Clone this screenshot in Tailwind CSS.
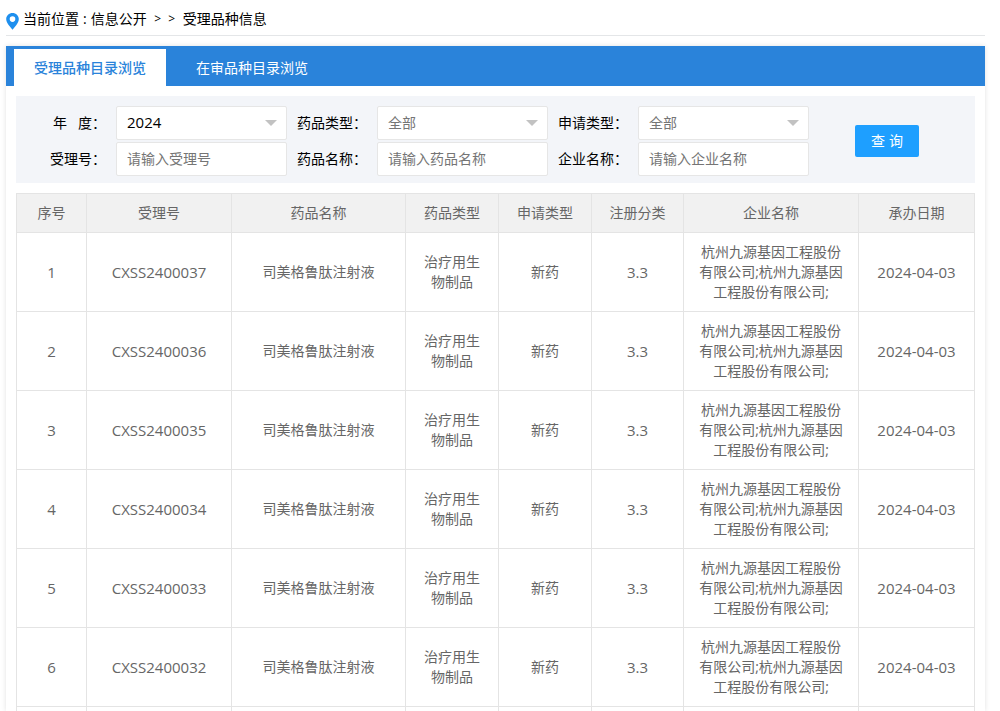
<!DOCTYPE html>
<html lang="zh-CN">
<head>
<meta charset="utf-8">
<meta name="viewport" content="width=device-width, initial-scale=1">
<title>受理品种信息</title>
<script src="https://cdn.jsdelivr.net/npm/@tailwindcss/browser@4"></script>
</head>
<body class="h-screen overflow-hidden bg-white pl-1.5 pr-[15px] font-['Open_Sans','Noto_Sans_CJK_SC',sans-serif] text-sm text-black">
<div class="flex h-screen flex-col">
  <nav class="flex h-9 shrink-0 items-center border-b border-[#e4e6e8] pt-0.5" aria-label="当前位置">
    <svg class="mt-1 mr-1 h-[18px] w-[13px]" viewBox="0 0 13 18" aria-hidden="true"><path fill="#1e8fee" fill-rule="evenodd" d="M6.5 1C3 1 .2 3.7.2 7.1c0 2.3 1.2 4.2 2.6 6.2l3.7 4.4 3.7-4.4c1.4-2 2.6-3.9 2.6-6.2C12.8 3.7 10 1 6.5 1Zm0 3.3a2.8 2.8 0 1 1 0 5.6 2.8 2.8 0 0 1 0-5.6Z"/></svg>
    <span class="mr-1">当前位置</span><span class="mr-1">:</span>
    <a href="#" class="mr-1">信息公开</a>
    <span class="w-3.5 text-center text-xs">&gt;</span><span class="mr-1 w-3.5 text-center text-xs">&gt;</span>
    <a href="#">受理品种信息</a>
  </nav>

  <main class="mt-2.5 min-h-0 flex-1 overflow-hidden shadow-[0_0_5px_rgba(0,0,0,0.12)]">
    <div class="flex h-10 items-end gap-2.5 bg-[#2a83da] pl-2" role="tablist">
      <button type="button" role="tab" aria-selected="true" class="h-[37px] bg-white px-5 font-medium text-[#2a83da]">受理品种目录浏览</button>
      <button type="button" role="tab" aria-selected="false" class="h-[37px] px-5 text-white">在审品种目录浏览</button>
    </div>

    <div class="px-2.5 pt-2.5">
      <form class="flex items-center bg-[#f3f5f9] pt-2.5 pr-14 pb-[7px]">
        <div class="grid flex-1 grid-cols-[90px_1fr_70px_1fr_70px_1fr] items-center gap-x-2.5 gap-y-0.5">
          <label for="year" class="whitespace-nowrap text-right">年&nbsp;&nbsp;&nbsp;度：</label>
          <div class="relative">
            <select id="year" class="block h-[34px] w-full appearance-none rounded-xs border border-[#e6e6e6] bg-white px-2.5 text-[15px]"><option>2024</option></select>
            <svg class="pointer-events-none absolute top-3.5 right-2.5 h-1.5 w-3" viewBox="0 0 12 6" aria-hidden="true"><path fill="#c2c2c2" d="M0 0h12L6 6z"/></svg>
          </div>
          <label for="drug-type" class="whitespace-nowrap">药品类型：</label>
          <div class="relative">
            <select id="drug-type" class="block h-[34px] w-full appearance-none rounded-xs border border-[#e6e6e6] bg-white px-2.5 text-[#757575]"><option>全部</option></select>
            <svg class="pointer-events-none absolute top-3.5 right-2.5 h-1.5 w-3" viewBox="0 0 12 6" aria-hidden="true"><path fill="#c2c2c2" d="M0 0h12L6 6z"/></svg>
          </div>
          <label for="apply-type" class="whitespace-nowrap">申请类型：</label>
          <div class="relative">
            <select id="apply-type" class="block h-[34px] w-full appearance-none rounded-xs border border-[#e6e6e6] bg-white px-2.5 text-[#757575]"><option>全部</option></select>
            <svg class="pointer-events-none absolute top-3.5 right-2.5 h-1.5 w-3" viewBox="0 0 12 6" aria-hidden="true"><path fill="#c2c2c2" d="M0 0h12L6 6z"/></svg>
          </div>
          <label for="accept-no" class="whitespace-nowrap text-right">受理号：</label>
          <input id="accept-no" type="text" placeholder="请输入受理号" class="h-[34px] w-full min-w-0 rounded-xs border border-[#e6e6e6] bg-white px-2.5 pb-0.5 placeholder:text-[#757575]">
          <label for="drug-name" class="whitespace-nowrap">药品名称：</label>
          <input id="drug-name" type="text" placeholder="请输入药品名称" class="h-[34px] w-full min-w-0 rounded-xs border border-[#e6e6e6] bg-white px-2.5 pb-0.5 placeholder:text-[#757575]">
          <label for="company" class="whitespace-nowrap">企业名称：</label>
          <input id="company" type="text" placeholder="请输入企业名称" class="h-[34px] w-full min-w-0 rounded-xs border border-[#e6e6e6] bg-white px-2.5 pb-0.5 placeholder:text-[#757575]">
        </div>
        <button type="button" class="ml-[46px] flex h-8 w-16 items-center justify-center gap-1 rounded-xs bg-[#1e9fff] text-white"><span>查</span><span>询</span></button>
      </form>

      <table class="mt-2.5 w-full table-fixed border-collapse text-center leading-5 text-[#666]">
        <colgroup>
          <col class="w-[70px]"><col class="w-[145px]"><col class="w-[174px]"><col class="w-[93px]"><col class="w-[93px]"><col class="w-[92px]"><col class="w-[175px]"><col class="w-[116px]">
        </colgroup>
        <thead class="bg-[#f1f1f1]">
          <tr class="h-[39px] *:border *:border-[#e4e4e4] *:font-normal">
            <th scope="col">序号</th><th scope="col">受理号</th><th scope="col">药品名称</th><th scope="col">药品类型</th><th scope="col">申请类型</th><th scope="col">注册分类</th><th scope="col">企业名称</th><th scope="col">承办日期</th>
          </tr>
        </thead>
        <tbody id="rows"></tbody>
      </table>
    </div>
  </main>
</div>
<script>
  const numbers = ['CXSS2400037', 'CXSS2400036', 'CXSS2400035', 'CXSS2400034', 'CXSS2400033', 'CXSS2400032', ''];
  document.getElementById('rows').innerHTML = numbers.map((no, i) => `
    <tr class="h-[79px] *:border *:border-[#e4e4e4] *:px-3.5">${no ? `
      <td class="text-[15px]">${i + 1}</td>
      <td class="text-[15px]">${no}</td>
      <td>司美格鲁肽注射液</td>
      <td>治疗用生物制品</td>
      <td>新药</td>
      <td class="text-[15px]">3.3</td>
      <td>杭州九源基因工程股份有限公司;杭州九源基因工程股份有限公司;</td>
      <td class="whitespace-nowrap text-[15px]">2024-04-03</td>` : '<td></td>'.repeat(8)}
    </tr>`).join('');
</script>
</body>
</html>
